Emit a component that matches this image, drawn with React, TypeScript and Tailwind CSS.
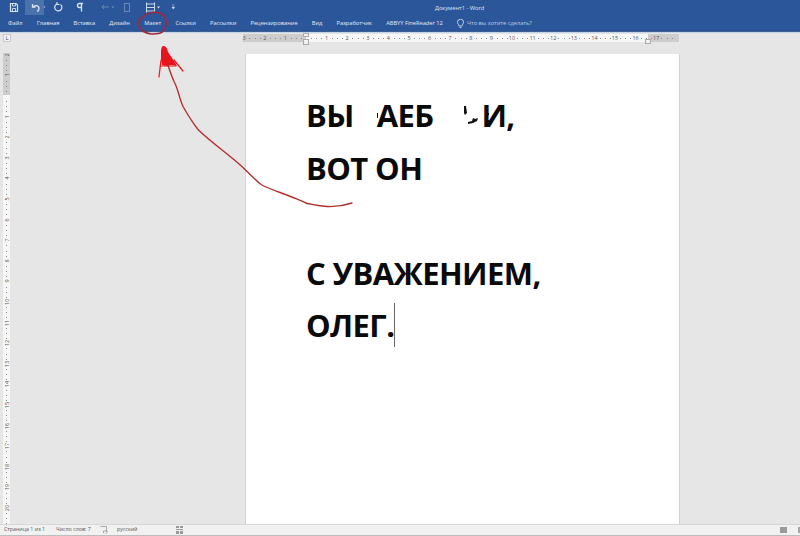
const tabs = ["Файл", "Главная", "Вставка", "Дизайн", "Макет", "Ссылки", "Рассылки", "Рецензирование", "Вид", "Разработчик", "ABBYY FineReader 12"];

const font = "font-['Open_Sans',sans-serif]";

function QuickBar() {
  return (
    <div className="relative h-[15px] flex items-center text-[#dbe5f2]">
      <svg width="200" height="15" viewBox="0 0 200 15" fill="none" stroke="currentColor">
        <rect x="25" y="0" width="19" height="15" fill="#4a72ad" stroke="none" />
        {/* save */}
        <path d="M10.5 3.5h5.500l1.500 1.500v6.500h-7z" strokeWidth="1.200" />
        <path d="M12.500 3.500v2.500h3v-2.500M12.500 11.500v-3h3v3" strokeWidth="0.9" />
        {/* undo */}
        <path d="M32.500 4v3h3M33 7c2-2.500 6-1.500 6 1.500 0 1.500-1 2.500-2 3" strokeWidth="1.300" />
        <path d="M43.500 6.500h2l-1 1.500z" fill="currentColor" stroke="none" opacity="0.8" />
        {/* repeat */}
        <path d="M60.500 4.500a3.600 3.600 0 1 1-3.500-.5M57 2v2.500h2.500" strokeWidth="1.200" />
        {/* pilcrow */}
        <path d="M81.500 3.500v8M83 3.500h-3.500a2 2 0 0 0 0 4h2" strokeWidth="1.300" />
        {/* dimmed */}
        <g opacity="0.35">
          <path d="M102 7h7M104 5l-2 2 2 2" strokeWidth="1" />
          <path d="M111.500 6.500h3l-1.500 2z" fill="currentColor" stroke="none" />
          <rect x="124.500" y="3.500" width="5" height="8" strokeWidth="1" />
        </g>
        {/* page width */}
        <path d="M146.500 2.500v10M154.500 2.500v10M146.500 4h8M146.500 11h8M147 7.500h7" strokeWidth="0.9" />
        <path d="M157 6.500h3l-1.500 2z" fill="currentColor" stroke="none" />
        {/* customize */}
        <path d="M172 5h2.500M172 7h2.500l-1.200 2z" fill="currentColor" stroke="currentColor" strokeWidth="0.5" />
      </svg>
      <span className="absolute left-[435px] top-[3px] text-[5.700px] leading-[10px] text-[#dfe8f4]">Документ1 - Word</span>
    </div>
  );
}

function TabRow() {
  return (
    <div className="h-[17px] flex items-center pl-[8px] gap-[14.200px] text-[5.700px] text-[#e3ebf6] whitespace-nowrap">
      {tabs.map((t) => (
        <span key={t}>{t}</span>
      ))}
      <span className="flex items-center gap-[3px] text-[#b9cbe4]">
        <svg width="7" height="10" viewBox="0 0 7 10" fill="none" stroke="#e3ebf6" strokeWidth="0.8">
          <path d="M2 7c0-1.500-1.500-2-1.500-3.800a3 3 0 0 1 6 0C6.500 5 5 5.500 5 7zM2.500 8.500h2" />
        </svg>
        Что вы хотите сделать?
      </span>
    </div>
  );
}

function HorizontalRuler() {
  const marks = [-3, -2, -1, 1, 2, 3, 4, 5, 6, 7, 8, 9, 10, 11, 12, 13, 14, 15, 16, 17];
  const ticks = Array.from({ length: 84 }, (_, i) => i / 4 - 3).filter((v) => v % 1 !== 0);
  return (
    <div className="relative h-[22px] bg-[#e6e6e6] border-t border-[#c3d3e8]">
      <div className="absolute left-[3px] top-[1px] w-[8px] h-[8px] bg-[#f4f4f4] border border-[#c8c8c8] text-[6px] leading-[6px] text-center text-[#444]">L</div>
      <div className="absolute left-[243px] top-[1px] w-[436px] h-[8px] flex">
        <div className="w-[63px] bg-[#cdcdcd]" />
        <div className="w-[342px] bg-[#f7f7f7]" />
        <div className="w-[31px] bg-[#cdcdcd]" />
      </div>
      {ticks.map((t) => (
        <span key={t} className="absolute top-[5px] w-px h-px bg-[#888]" style={{ left: 306 + t * 20.6 }} />
      ))}
      {marks.map((m) => (
        <span
          key={m}
          className="absolute top-[1px] w-[8px] -ml-[4px] text-center text-[5.500px] leading-[8px] text-[#555]"
          style={{ left: 306 + m * 20.6 }}
        >
          {Math.abs(m)}
        </span>
      ))}
      <div className="absolute left-[303px] top-[0px] w-[6px] h-[4px] bg-[#f2f2f2] border border-[#aaa]" />
      <div className="absolute left-[303px] top-[6px] w-[6px] h-[6px] bg-[#f2f2f2] border border-[#aaa]" />
      <div className="absolute left-[645px] top-[6px] w-[6px] h-[5px] bg-[#f2f2f2] border border-[#aaa]" />
    </div>
  );
}

function VerticalRuler() {
  const marks = [-2, -1, 1, 2, 3, 4, 5, 6, 7, 8, 9, 10, 11, 12, 13, 14, 15, 16, 17, 18, 19, 20];
  const ticks = Array.from({ length: 92 }, (_, i) => i / 4 - 2).filter((v) => v % 1 !== 0);
  return (
    <div className="relative w-[7px] ml-[3px] shrink-0 flex flex-col">
      <div className="h-[42px] mt-[-1px] bg-[#cdcdcd]" />
      <div className="flex-1 bg-[#f7f7f7]" />
      {ticks.map((t) => (
        <span key={t} className="absolute left-[3px] w-px h-px bg-[#888]" style={{ top: 42 + t * 20.6 }} />
      ))}
      {marks.map((m) => (
        <span
          key={m}
          className="absolute left-0 w-[7px] -mt-[4px] text-center text-[5.500px] leading-[8px] text-[#555] -rotate-90"
          style={{ top: 42 + m * 20.6 }}
        >
          {Math.abs(m)}
        </span>
      ))}
    </div>
  );
}

function Page() {
  return (
    <div className="ml-[235px] w-[435px] h-full bg-white border-x border-[#d2d2d2] pl-[60px] pt-[35px] font-['Open_Sans',sans-serif] font-bold text-[31px] leading-[52.500px] text-[#0a0a0a] tracking-[-0.6px]">
      <div className="relative whitespace-nowrap">
        <span>ВЫ</span>
        <span className="ml-[23px]">АЕБ</span>
        <span className="ml-[48px]">И,</span>
        <svg className="absolute left-[68px] top-[16px]" width="120" height="24" viewBox="0 0 120 24" fill="#111">
          <path d="M3 8l1 0 0 5-1 0zM90 1l2 0 1 7-2 2-1-2z" />
          <path d="M94 17l4-1 1-3 2 1 3-1-1 3-4 2-5 1zM112 3l2-1 0 3-2 0zM114 8l1 0 0 2-1 0zM113 15l2 0 0 3-2 0z" />
        </svg>
      </div>
      <div>ВОТ ОН</div>
      <div className="h-[52.500px]" />
      <div>С УВАЖЕНИЕМ,</div>
      <div className="flex items-center">
        ОЛЕГ.
        <span className="w-px h-[44px] bg-[#666]" />
      </div>
    </div>
  );
}

function StatusBar() {
  return (
    <div className="h-[12px] shrink-0 bg-[#f1f1f1] border-t border-[#d8d8d8] border-b border-b-[#bdbdbd] relative flex items-center pl-[4px] text-[5.300px] text-[#555] whitespace-nowrap">
      <span className="w-[41px]">Страница 1 из 1</span>
      <span className="ml-[11px] w-[35px]">Число слов: 7</span>
      <svg className="ml-[9px]" width="8" height="8" viewBox="0 0 8 8" fill="none" stroke="#888" strokeWidth="0.7">
        <path d="M0.500 0.500h6v4.500h-3v2M6 4l1.500 2-2 1.500" />
      </svg>
      <span className="ml-[9px] w-[21px]">русский</span>
      <svg className="ml-[38px]" width="7" height="8" viewBox="0 0 7 8" fill="#999">
        <path d="M0 0h3v2h-3zM4 0h3v2h-3zM0 3h7v1h-7zM0 5h3v3h-3zM4 5h3v3h-3z" />
      </svg>
      <div className="absolute right-[13px] top-[2px] w-[7px] h-[6px] bg-[#9a9a9a]" />
      <div className="absolute right-0 top-[2px] w-[2px] h-[6px] bg-[#a5a5a5]" />
    </div>
  );
}

export default function App() {
  return (
    <div className={`relative w-[800px] h-[536px] overflow-hidden flex flex-col bg-[#e6e6e6] ${font}`}>
      <div className="h-[32px] shrink-0 bg-[#2b579a] border-b border-[#3c5f92]">
        <QuickBar />
        <TabRow />
      </div>
      <HorizontalRuler />
      <div className="flex-1 min-h-0 flex">
        <VerticalRuler />
        <Page />
      </div>
      <StatusBar />
      {/* red marker scribble on top */}
      <svg className="absolute inset-0 pointer-events-none" width="800" height="536" viewBox="0 0 800 536" fill="none">
        <path d="M143 17c4-5 13-6 19-3 5 3 5 10 3 14-2 6-8 6-14 6-6-1-11-4-12-9-1-3 0-6 4-8" stroke="#a0283c" strokeWidth="1.600" />
        <path d="M352 203c-9 3-16 4-25 3.500-9-.5-14-2-20-3-6-3-9-4-14-6-12-5-23-8-32-13-6-5-12-11-18-17-15-14-32-25-45-38-7-9-11-16-15-23-4-9-5-18-9-25-3-7-5-13-7-19" stroke="#b2302c" strokeWidth="1.400" strokeLinecap="round" />
        <path d="M163 46c3 0 4 2 5 6 2 3 4 6 6 9l3 5-5-1-6 1-4-1-1-6 0-7c0-3 1-6 2-6z" fill="#e5141d" />
        <path d="M161 60l-2 17M174 60l9 11M160 66h16" stroke="#e5141d" strokeWidth="1.200" strokeLinecap="round" />
      </svg>
    </div>
  );
}
